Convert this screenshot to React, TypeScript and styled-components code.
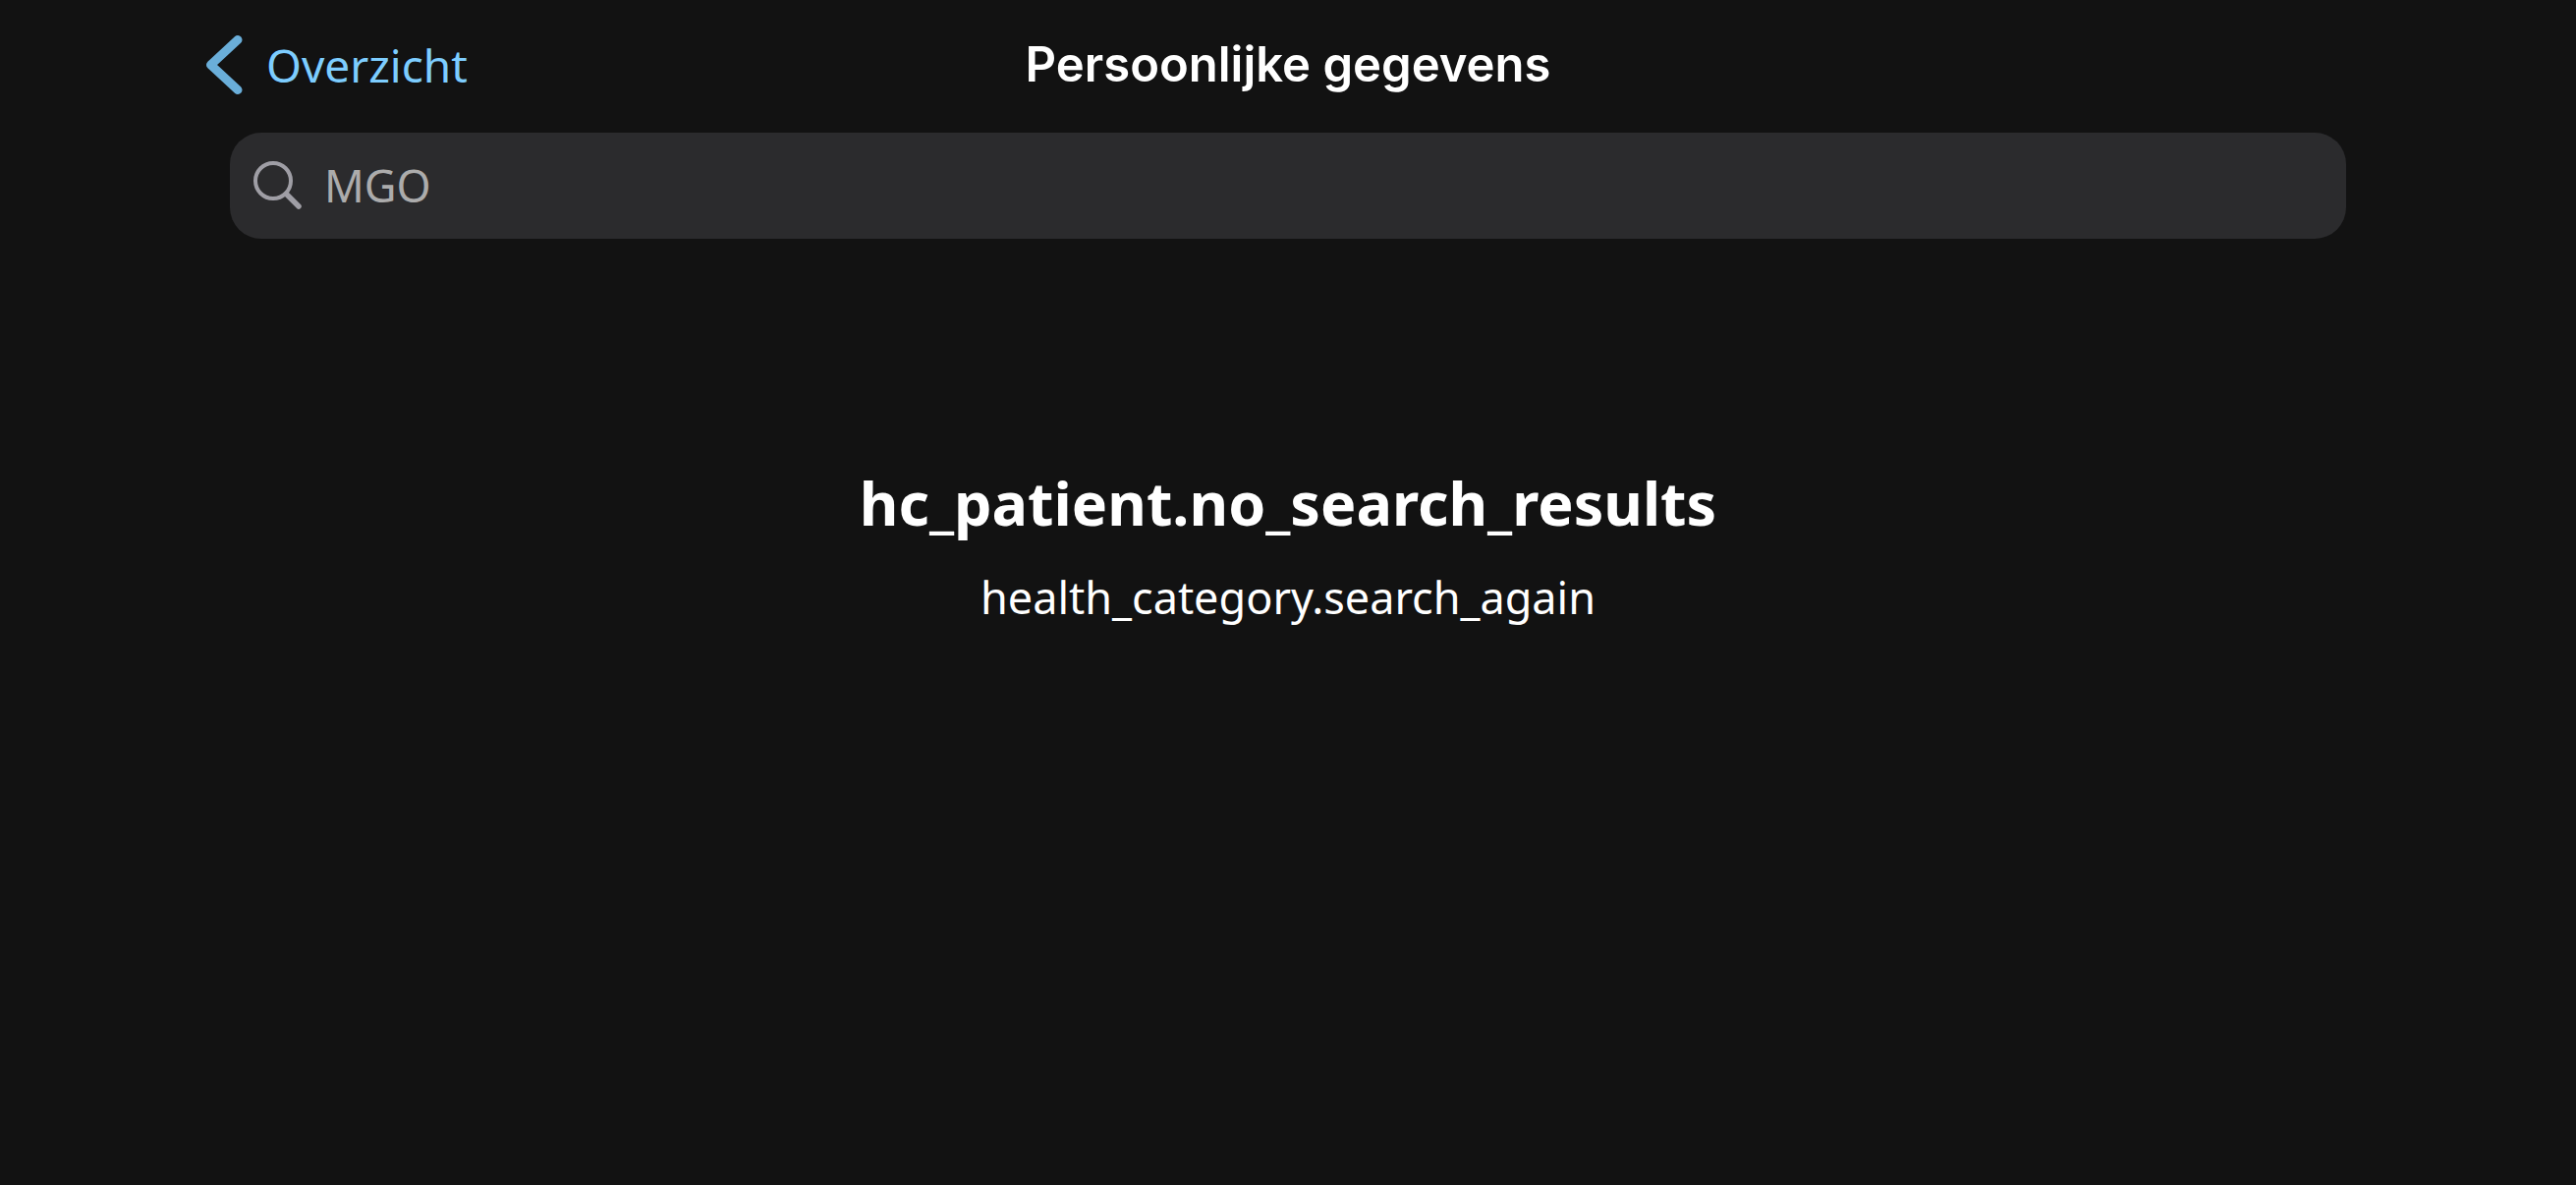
import React from "react";
import styled, { createGlobalStyle } from "styled-components";

const Global = createGlobalStyle`
  * { box-sizing: border-box; }
  body { margin: 0; background: #121212; color: #fff; font-family: "Noto Sans", sans-serif; }
`;
const Page = styled.main`
  display: flex;
  flex-direction: column;
  min-height: 100vh;
`;
const NavBar = styled.header`
  display: grid;
  grid-template-columns: 1fr auto 1fr;
  align-items: center;
  height: 132px;
  padding: 0 209px;
`;
const Back = styled.button`
  display: flex;
  align-items: center;
  justify-self: start;
  gap: 24px;
  padding: 0;
  border: 0;
  background: none;
  color: #7dcdff;
  font: 400 46px/64px "Noto Sans", sans-serif;
`;
const Title = styled.h1`
  margin: 0;
  font: 600 49px/64px Inter, sans-serif;
`;
const SearchField = styled.label`
  display: flex;
  align-items: center;
  gap: 20px;
  height: 108px;
  margin: 3px 234px 0;
  padding: 0 22px;
  border-radius: 32px;
  background: #2b2b2d;
`;
const SearchInput = styled.input`
  flex: 1;
  min-width: 0;
  padding: 0;
  border: 0;
  outline: 0;
  background: none;
  color: #acacac;
  font: 400 45px/64px "Noto Sans", sans-serif;
  &::placeholder { color: #acacac; opacity: 1; }
`;
const Empty = styled.section`
  display: flex;
  flex-direction: column;
  align-items: center;
  gap: 24px;
  padding-top: 229px;
  text-align: center;
`;
const Heading = styled.h2`
  margin: 0;
  font: 700 61px/80px "Noto Sans", sans-serif;
`;
const Hint = styled.p`
  margin: 0;
  font: 400 45px/64px "Noto Sans", sans-serif;
`;

export default function App() {
  return (
    <Page>
      <Global />
      <NavBar>
        <Back type="button">
          <svg width="38" height="62" viewBox="0 0 38 62" fill="none" aria-hidden="true">
            <path d="M33 5.500L5.500 31L33 56.500" stroke="#6aaed9" strokeWidth="9" strokeLinecap="round" strokeLinejoin="round" />
          </svg>
          Overzicht
        </Back>
        <Title>Persoonlijke gegevens</Title>
      </NavBar>
      <SearchField>
        <svg width="54" height="54" viewBox="0 0 54 54" fill="none" stroke="#9f9ea5" strokeLinecap="round" aria-hidden="true">
          <circle cx="22" cy="22" r="18" strokeWidth="4" />
          <path d="M35.500 35.500L48 48" strokeWidth="5.500" />
        </svg>
        <SearchInput type="text" aria-label="Zoeken" placeholder="MGO" />
      </SearchField>
      <Empty>
        <Heading>hc_patient.no_search_results</Heading>
        <Hint>health_category.search_again</Hint>
      </Empty>
    </Page>
  );
}
